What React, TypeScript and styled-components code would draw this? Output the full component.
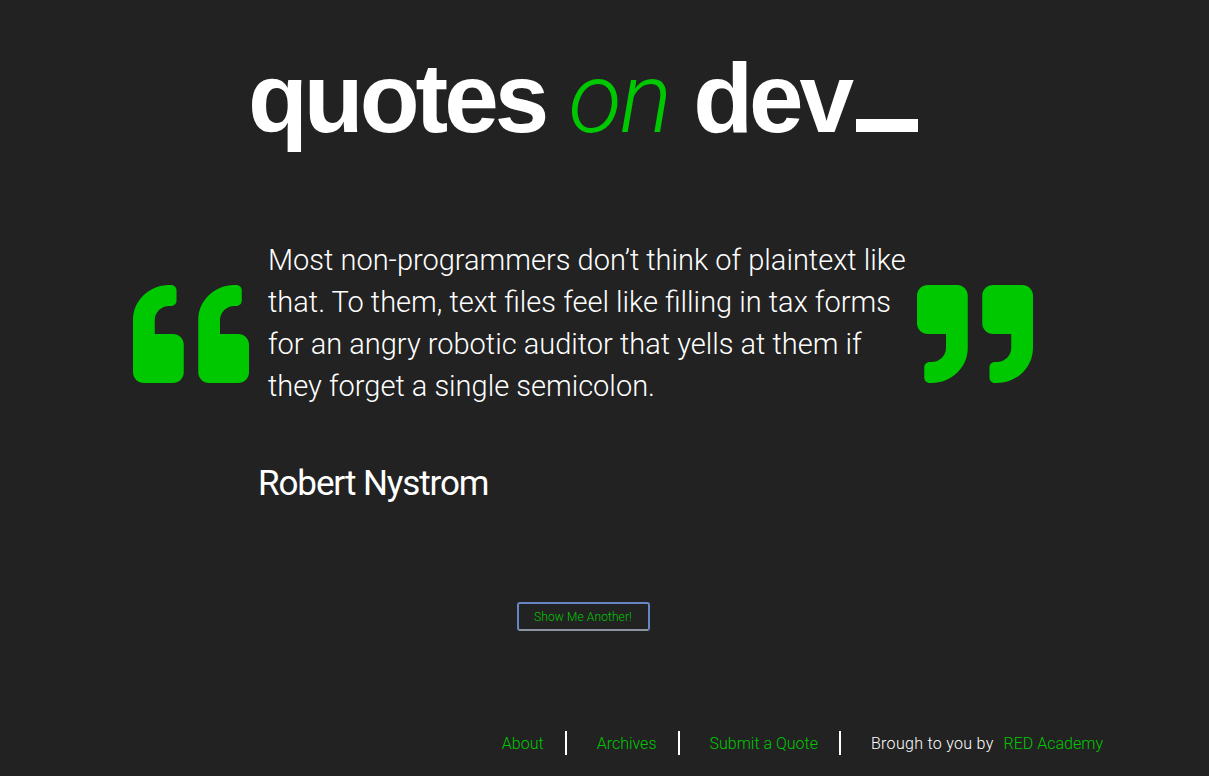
import React from "react";
import styled, { createGlobalStyle } from "styled-components";

const GREEN = "#00c800";

const Global = createGlobalStyle`
  html, body { margin: 0; padding: 0; background: #222222; }
  body { font-family: Roboto, "Liberation Sans", sans-serif; color: #ffffff; }
`;

const Page = styled.div`
  min-height: 776px;
  display: flex;
  flex-direction: column;
  background: #222222;
`;

const Main = styled.main`
  width: 900px;
  margin-left: 133px;
  display: flex;
  flex-direction: column;
`;

const Title = styled.h1`
  margin: 38px 0 0;
  text-align: center;
  font-family: "Liberation Sans", Arial, sans-serif;
  font-weight: 700;
  font-size: 98px;
  line-height: 120px;
  letter-spacing: -4px;
  color: #ffffff;
`;

const Accent = styled.span`
  color: ${GREEN};
  font-family: Roboto, sans-serif;
  font-weight: 300;
  font-style: italic;
  letter-spacing: -2px;
`;

/* blinking-cursor style underscore: a solid block sitting on the baseline */
const Cursor = styled.span`
  display: inline-block;
  width: 62px;
  height: 13px;
  margin-left: 6px;
  overflow: hidden;
  line-height: 13px;
  font-size: 13px;
  color: transparent;
  background: #ffffff;
`;

const QuoteRow = styled.section`
  margin-top: 80px;
  display: flex;
  align-items: flex-start;
`;

const Mark = styled.svg`
  flex: none;
  width: 116px;
  height: 98px;
  margin-top: 46px;
  fill: ${GREEN};
`;

const QuoteText = styled.p`
  flex: none;
  width: 649px;
  margin: 0 0 0 19px;
  font-family: Roboto, sans-serif;
  font-weight: 300;
  font-size: 29px;
  line-height: 42px;
  color: #ffffff;
`;

const Author = styled.h2`
  margin: 56px 0 0 125px;
  font-family: Roboto, sans-serif;
  font-weight: 400;
  font-size: 35px;
  line-height: 42px;
  letter-spacing: -1.1px;
  color: #ffffff;
`;

const ButtonRow = styled.div`
  margin-top: 97px;
  display: flex;
  justify-content: center;
`;

const Button = styled.button`
  width: 133px;
  height: 29px;
  padding: 0;
  background: #222222;
  border: 2px solid #6786c4;
  border-bottom-color: #8c94a4;
  border-radius: 3px;
  color: ${GREEN};
  font-family: Roboto, sans-serif;
  font-weight: 300;
  font-size: 12px;
  letter-spacing: 0.1px;
  cursor: pointer;
`;

const Footer = styled.footer`
  margin-top: 100px;
  padding-right: 106px;
  display: flex;
  justify-content: flex-end;
  align-items: center;
  font-family: Roboto, sans-serif;
  font-weight: 300;
  font-size: 16px;
`;

const NavLink = styled.a`
  color: ${GREEN};
  text-decoration: none;
`;

const Sep = styled.span`
  width: 2px;
  height: 24px;
  background: #ffffff;
  margin: 0 30px 0 21px;
`;

const Credit = styled.span`
  color: #ffffff;
  margin-right: 10px;
  letter-spacing: 0.3px;
`;

const quoteLeft =
  "M464 256h-80v-64c0-35.3 28.7-64 64-64h8c13.3 0 24-10.7 24-24V56c0-13.3-10.7-24-24-24h-8c-88.4 0-160 71.6-160 160v240c0 26.5 21.5 48 48 48h128c26.5 0 48-21.5 48-48V304c0-26.5-21.5-48-48-48zm-288 0H96v-64c0-35.3 28.7-64 64-64h8c13.3 0 24-10.7 24-24V56c0-13.3-10.7-24-24-24h-8C71.6 32 0 103.6 0 192v240c0 26.5 21.5 48 48 48h128c26.5 0 48-21.5 48-48V304c0-26.5-21.5-48-48-48z";
const quoteRight =
  "M464 32H336c-26.5 0-48 21.5-48 48v128c0 26.5 21.5 48 48 48h80v64c0 35.3-28.7 64-64 64h-8c-13.3 0-24 10.7-24 24v48c0 13.3 10.7 24 24 24h8c88.4 0 160-71.6 160-160V80c0-26.5-21.5-48-48-48zm-288 0H48C21.5 32 0 53.5 0 80v128c0 26.5 21.5 48 48 48h80v64c0 35.3-28.7 64-64 64h-8c-13.3 0-24 10.7-24 24v48c0 13.3 10.7 24 24 24h8c88.4 0 160-71.6 160-160V80c0-26.5-21.5-48-48-48z";

export default function App() {
  return (
    <Page>
      <Global />
      <Main>
        <Title>
          quotes <Accent>on</Accent> dev<Cursor>_</Cursor>
        </Title>
        <QuoteRow>
          <Mark viewBox="0 32 512 448" preserveAspectRatio="none">
            <path d={quoteLeft} />
          </Mark>
          <QuoteText>
            Most non-programmers don’t think of plaintext like that. To them,
            text files feel like filling in tax forms for an angry robotic
            auditor that yells at them if they forget a single semicolon.
          </QuoteText>
          <Mark viewBox="0 32 512 448" preserveAspectRatio="none">
            <path d={quoteRight} />
          </Mark>
        </QuoteRow>
        <Author>Robert Nystrom</Author>
        <ButtonRow>
          <Button type="button">Show Me Another!</Button>
        </ButtonRow>
      </Main>
      <Footer>
        <NavLink href="#">About</NavLink>
        <Sep />
        <NavLink href="#">Archives</NavLink>
        <Sep />
        <NavLink href="#">Submit a Quote</NavLink>
        <Sep />
        <Credit>Brough to you by</Credit>
        <NavLink href="#">RED Academy</NavLink>
      </Footer>
    </Page>
  );
}
